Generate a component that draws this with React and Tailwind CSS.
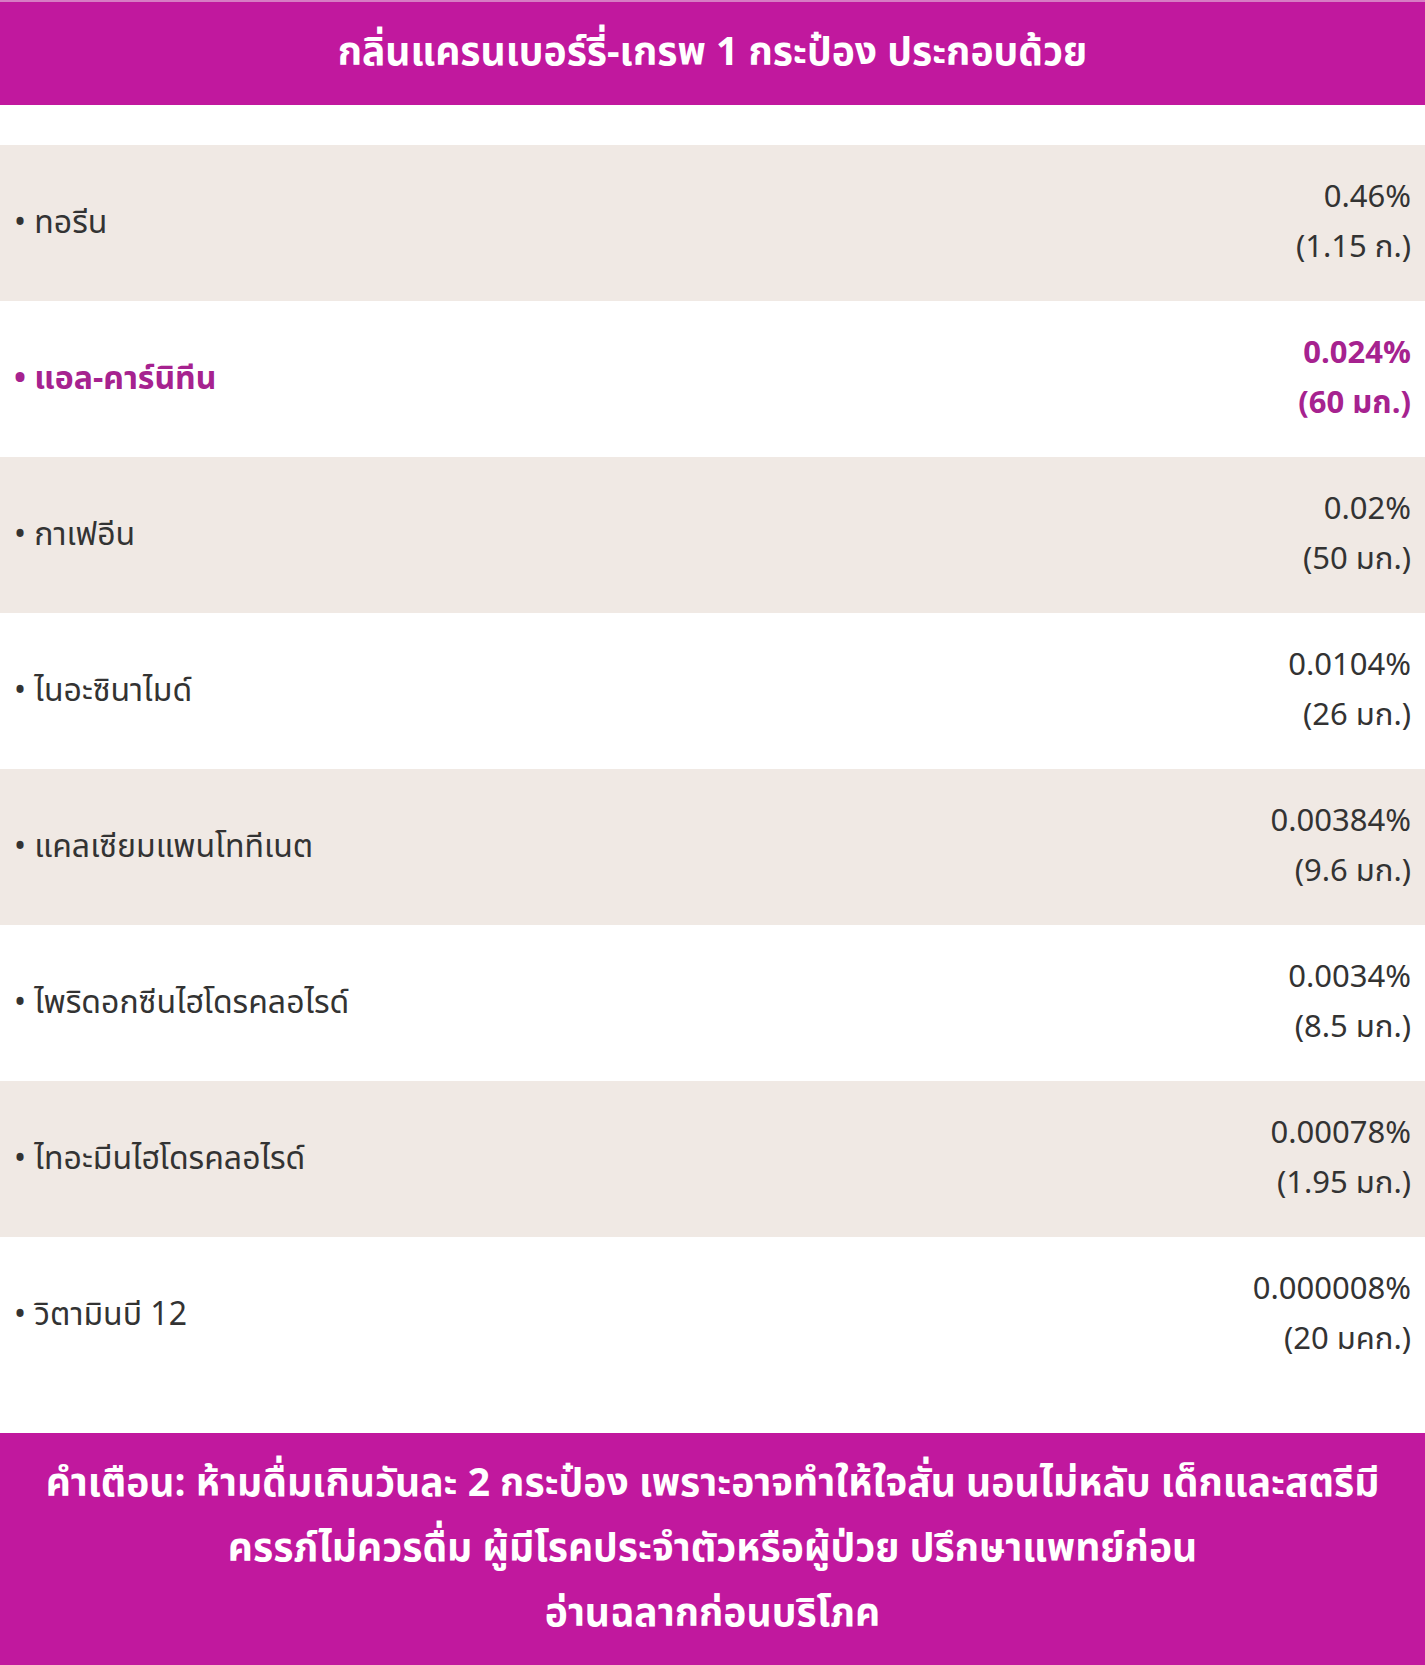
const rows = [
  { name: "ทอรีน", pct: "0.46%", amt: "(1.15 ก.)" },
  { name: "แอล-คาร์นิทีน", pct: "0.024%", amt: "(60 มก.)", hot: true },
  { name: "กาเฟอีน", pct: "0.02%", amt: "(50 มก.)" },
  { name: "ไนอะซินาไมด์", pct: "0.0104%", amt: "(26 มก.)" },
  { name: "แคลเซียมแพนโททีเนต", pct: "0.00384%", amt: "(9.6 มก.)" },
  { name: "ไพริดอกซีนไฮโดรคลอไรด์", pct: "0.0034%", amt: "(8.5 มก.)" },
  { name: "ไทอะมีนไฮโดรคลอไรด์", pct: "0.00078%", amt: "(1.95 มก.)" },
  { name: "วิตามินบี 12", pct: "0.000008%", amt: "(20 มคก.)" },
];

export default function App() {
  return (
    <div className="w-full bg-white font-['Noto_Sans_Thai','Noto_Sans',sans-serif]">
      {/* Header */}
      <div className="h-[105px] bg-[#c1189e] border-t-2 border-[#d77cc4] flex items-center justify-center">
        <h1 className="text-white font-bold text-[39px] leading-none">
          กลิ่นแครนเบอร์รี่-เกรพ 1 กระป๋อง ประกอบด้วย
        </h1>
      </div>

      {/* Ingredient list */}
      <div className="py-10">
        {rows.map((r, i) => (
          <div
            key={r.name}
            className={
              "h-[156px] flex items-center justify-between pl-[14px] pr-[14px] " +
              (i % 2 === 0 ? "bg-[#f0e9e4] " : "bg-white ") +
              (r.hot ? "text-[#a6228f] font-bold" : "text-[#333333]")
            }
          >
            <div className="text-[32px] leading-none">• {r.name}</div>
            <div className="text-right text-[31px] leading-[50px]">
              <div>{r.pct}</div>
              <div>{r.amt}</div>
            </div>
          </div>
        ))}
      </div>

      {/* Warning */}
      <div className="bg-[#c1189e] py-[19px] px-4 text-center text-white font-bold text-[39px] leading-[65px]">
        <p>
          คำเตือน: ห้ามดื่มเกินวันละ 2 กระป๋อง เพราะอาจทำให้ใจสั่น นอนไม่หลับ เด็กและสตรีมี
          <br />
          ครรภ์ไม่ควรดื่ม ผู้มีโรคประจำตัวหรือผู้ป่วย ปรึกษาแพทย์ก่อน
          <br />
          อ่านฉลากก่อนบริโภค
        </p>
      </div>
    </div>
  );
}
